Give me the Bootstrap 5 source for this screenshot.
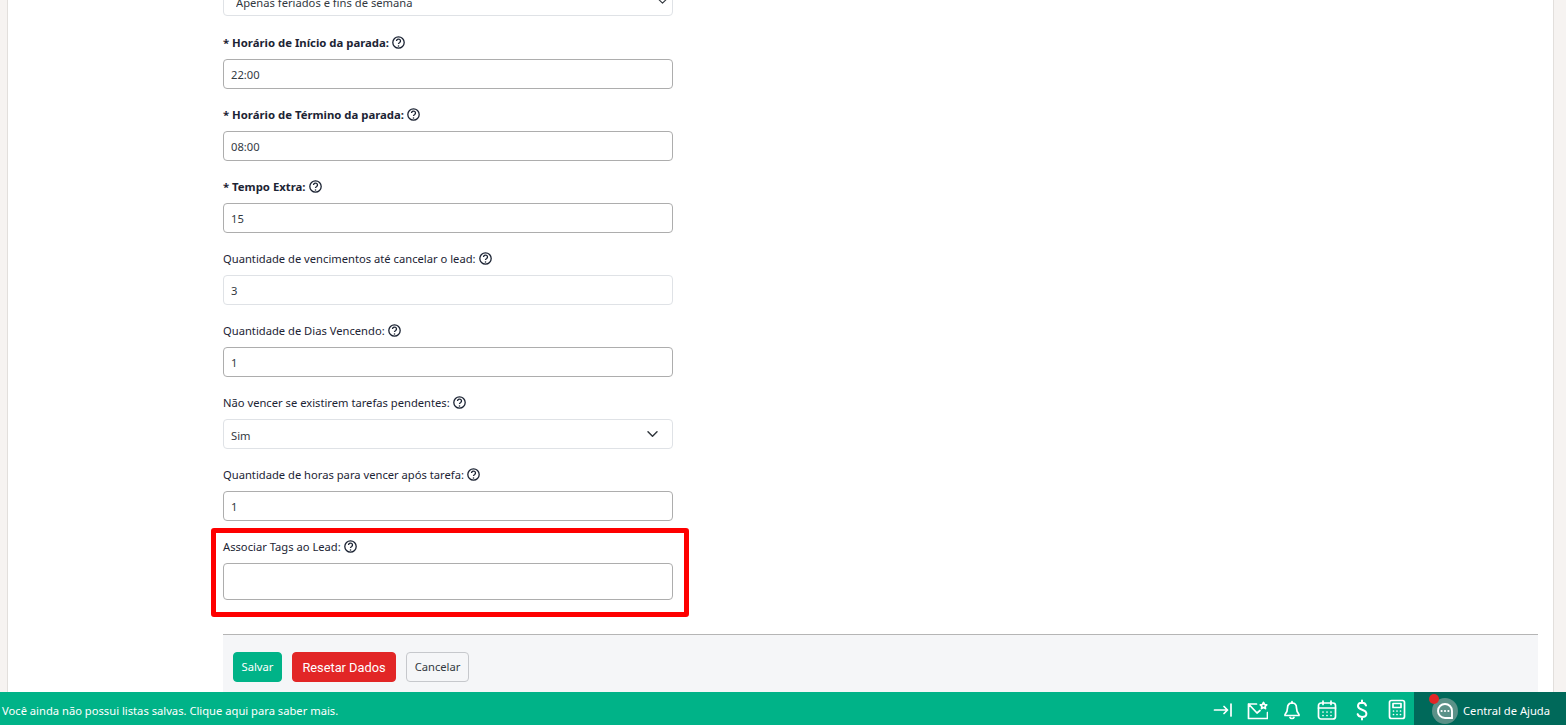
<!DOCTYPE html>
<html lang="pt-BR">
<head>
<meta charset="utf-8">
<title>Formulário</title>
<link href="https://cdn.jsdelivr.net/npm/bootstrap@5.3.0/dist/css/bootstrap.min.css" rel="stylesheet">
<style>
html,body{height:100%;overflow:hidden;}
body{background:#f6f3f1;font-family:"Noto Sans","Open Sans",sans-serif;font-size:11.2px;color:#1c2434;}
.app-shell{height:725px;}
.sheet{height:692px;margin-left:7px;margin-right:12px;background:#fff;border-left:1px solid #e2dfdc;border-right:1px solid #e2dfdc;overflow:hidden;padding-left:215px;padding-right:15px;}
.form-col{width:450px;margin-top:-14px;}
.fgroup{height:72px;}
.fgroup-first{height:48px;}
.fgroup label,.tag-box label{display:flex;align-items:center;gap:3.500px;height:17px;margin:0 0 8px;line-height:17px;}
.fgroup label.req{font-weight:700;font-size:11.35px;gap:3px;}
.fctl{height:30px;min-height:30px;padding:1px 7px 0;font-size:11.2px;color:#33393f;border:1px solid #adadad;border-radius:4px;}
.fctl.soft{border-color:#dfe2e6;}
.form-select.fctl{padding:5px 30px 0 7px;background-position:right 12px center;background-size:15px 12px;}
.form-select.sel-small{padding-left:12px;background-position:right 4px center;background-size:11px 9px;}
.tag-box{width:478px;height:89px;margin:-10px 0 0 -12px;border:5px solid #fe0000;border-radius:3px;padding:5px 11px 0 7px;}
.tag-box .fctl{height:37px;}
.action-panel{margin-top:17px;height:60px;border-top:1px solid #b5b5b5;background:#f5f6f8;padding:17px 10px 0;width:1315px;gap:10px;}
.action-panel .btn{height:30px;padding:0;border-radius:4px;font-size:11.2px;}
.action-panel .btn-save{width:49px;background:#00b388;border-color:#00b388;color:#fff;}
.action-panel .btn-reset{width:104px;padding-top:2px;background:#e22626;border-color:#e22626;color:#fff;font-family:Roboto,sans-serif;font-size:12.8px;}
.action-panel .btn-cancel{width:63px;background:#f5f6f8;border:1px solid #c6c8cc;color:#33393f;}
.help-ic{width:13px;height:13px;flex:none;}
.foot-bar{height:33px;background:#00b388;color:#fff;}
.foot-msg{padding:6px 0 0 2px;}
.foot-ic{width:35px;height:33px;display:flex;align-items:center;justify-content:center;padding-top:2px;}
.foot-ic svg{width:22px;height:22px;fill:none;stroke:#fff;stroke-width:1.7;stroke-linecap:round;stroke-linejoin:round;}
.foot-ic svg.ic-dollar{stroke-width:2;}
.help-zone{width:152px;height:33px;background:#00695a;padding:4px 0 0 18px;gap:5px;}
.help-label{padding-top:2px;}
.help-avatar{width:26px;height:26px;border-radius:50%;background:#5b9188;position:relative;display:flex;align-items:center;justify-content:center;}
.help-dot{position:absolute;left:-3px;top:-4px;width:10px;height:10px;border-radius:50%;background:#e22626;}
</style>
</head>
<body>
<svg width="0" height="0" class="position-absolute">
<symbol id="qm" viewBox="0 0 13 13"><circle cx="6.5" cy="6.5" r="5.7" fill="none" stroke="#1c2434" stroke-width="1.3"/><path d="M4.500 5a2 1.900 0 1 1 3.200 1.500c-.8.500-1.200.8-1.200 1.600" fill="none" stroke="#1c2434" stroke-width="1.300"/><circle cx="6.500" cy="10" r=".8" fill="#1c2434"/></symbol>
</svg>
<div class="app-shell d-flex flex-column">
<main class="sheet">
<div class="form-col">
<div class="fgroup-first"><select class="form-select fctl soft sel-small"><option>Apenas feriados e fins de semana</option></select></div>
<div class="fgroup"><label class="req">* Horário de Início da parada: <svg class="help-ic"><use href="#qm"/></svg></label><input class="form-control fctl" value="22:00"></div>
<div class="fgroup"><label class="req">* Horário de Término da parada: <svg class="help-ic"><use href="#qm"/></svg></label><input class="form-control fctl" value="08:00"></div>
<div class="fgroup"><label class="req">* Tempo Extra: <svg class="help-ic"><use href="#qm"/></svg></label><input class="form-control fctl" value="15"></div>
<div class="fgroup"><label>Quantidade de vencimentos até cancelar o lead: <svg class="help-ic"><use href="#qm"/></svg></label><input class="form-control fctl soft" value="3"></div>
<div class="fgroup"><label>Quantidade de Dias Vencendo: <svg class="help-ic"><use href="#qm"/></svg></label><input class="form-control fctl" value="1"></div>
<div class="fgroup"><label>Não vencer se existirem tarefas pendentes: <svg class="help-ic"><use href="#qm"/></svg></label><select class="form-select fctl soft"><option>Sim</option></select></div>
<div class="fgroup"><label>Quantidade de horas para vencer após tarefa: <svg class="help-ic"><use href="#qm"/></svg></label><input class="form-control fctl" value="1"></div>
<div class="tag-box"><label>Associar Tags ao Lead: <svg class="help-ic"><use href="#qm"/></svg></label><input class="form-control fctl"></div>
</div>
<div class="action-panel d-flex align-items-start">
<button class="btn btn-save">Salvar</button>
<button class="btn btn-reset">Resetar Dados</button>
<button class="btn btn-cancel">Cancelar</button>
</div>
</main>
<footer class="foot-bar d-flex align-items-center">
<div class="foot-msg flex-grow-1">Você ainda não possui listas salvas. Clique aqui para saber mais.</div>
<div class="d-flex">
<span class="foot-ic"><svg viewBox="0 0 22 22"><path d="M3.500 11h13M13 7.500l3.500 3.500-3.500 3.500M20 5v12"/></svg></span>
<span class="foot-ic"><svg viewBox="0 0 22 22"><path d="M10.500 5H2.500v14.500h19V13.500M2.500 5l8.500 9 3-2.500"/><path d="M17.500 3.500l1 2 2.200.3-1.600 1.600.4 2.200-2-1-2 1 .4-2.200-1.600-1.600 2.200-.3z"/></svg></span>
<span class="foot-ic"><svg viewBox="0 0 22 22"><path d="M11 2.500v1.500M11 4c-2.800 0-4.500 2.200-4.500 5 0 3.500-1 5-2.500 6.500v1h14v-1c-1.500-1.500-2.500-3-2.500-6.500 0-2.800-1.700-5-4.500-5zM9 18.500c.5 1.300 3.500 1.300 4 0"/></svg></span>
<span class="foot-ic"><svg viewBox="0 0 22 22"><rect x="2.500" y="4" width="17" height="16" rx="2.500"/><path d="M2.500 9h17M7 2v3.500M15 2v3.500M7 13h.01M11 13h.01M15 13h.01M7 16.500h.01M11 16.500h.01M15 16.500h.01"/></svg></span>
<span class="foot-ic"><svg class="ic-dollar" viewBox="0 0 22 22"><path d="M15 6.500c-.5-1.800-2.100-2.700-4-2.700-2.300 0-4 1.200-4 3.300 0 4.600 8.400 2.700 8.400 7.600 0 2-2 3.200-4.400 3.200-2.200 0-3.900-.9-4.400-2.800M11 1.500V4M11 18v2.500"/></svg></span>
<span class="foot-ic"><svg viewBox="0 0 22 22"><rect x="3.500" y="1.500" width="15" height="18" rx="2"/><rect x="7" y="4.500" width="8" height="4"/><path d="M7.500 12h.01M11 12h.01M14.500 12h.01M7.500 15.500h.01M11 15.500h.01M14.500 15.500h.01"/></svg></span>
</div>
<div class="help-zone d-flex align-items-center">
<span class="help-avatar"><span class="help-dot"></span><svg width="20" height="20" viewBox="0 0 20 20"><path d="M10 3c-3.900 0-7 3-7 6.900s3.100 7.100 7 7.100h7V9.900C17 6 13.900 3 10 3z" fill="none" stroke="#fff" stroke-width="1.900"/><circle cx="6.600" cy="10" r="1.100" fill="#fff"/><circle cx="10" cy="10" r="1.100" fill="#fff"/><circle cx="13.400" cy="10" r="1.100" fill="#fff"/></svg></span>
<span class="help-label">Central de Ajuda</span>
</div>
</footer>
</div>
</body>
</html>
